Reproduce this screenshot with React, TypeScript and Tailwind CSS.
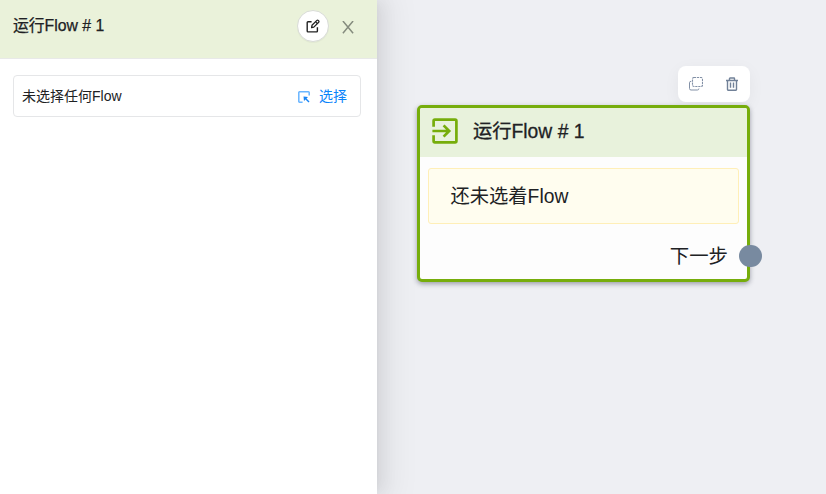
const font = "font-['Liberation_Sans','Noto_Sans_CJK_SC',sans-serif]";

function EditIcon() {
  return (
    <svg width="14" height="14" viewBox="0 0 14 14" fill="none" stroke="#222" strokeWidth="1.4">
      <path d="M5.6 2.7H2a.8.8 0 0 0-.8.8v8.6a.8.8 0 0 0 .8.8h8.6a.8.8 0 0 0 .8-.8V8.3" />
      <path d="M5.6 8.6l.4-2.3 4.9-4.9a.9.9 0 0 1 1.3 0l.5.5a.9.9 0 0 1 0 1.3L7.8 8.1z" strokeWidth="1.3" strokeLinejoin="round" />
      <path d="M9.7 2.9l1.6 1.6" strokeWidth="1.1" />
    </svg>
  );
}

function SelectIcon() {
  return (
    <svg width="12" height="12" viewBox="0 0 12 12" fill="none">
      <path d="M4.6 11.2H1.5a.7.7 0 0 1-.7-.7v-9a.7.7 0 0 1 .7-.7h9a.7.7 0 0 1 .7.7v3.1" stroke="#69b5ff" strokeWidth="1.5" />
      <path d="M11 11L6.8 6.8" stroke="#1684f5" strokeWidth="1.4" />
      <path d="M5.5 5.5l4.5.5-4 4z" fill="#1684f5" />
    </svg>
  );
}

function CopyIcon() {
  return (
    <svg width="14" height="14" viewBox="0 0 14 14" fill="none" stroke="#8290a6">
      <rect x="3.5" y="0.5" width="10" height="9" rx="1.4" strokeWidth="1.1" strokeDasharray="2.2 .8" />
      <path d="M2.3 4.3H2A1.5 1.5 0 0 0 .5 5.8v5.7A1.5 1.5 0 0 0 2 13h6.4a1.5 1.5 0 0 0 1.5-1.5" strokeWidth="1" />
    </svg>
  );
}

function TrashIcon() {
  return (
    <svg width="14" height="14" viewBox="0 0 14 14" fill="none" stroke="#718198" strokeWidth="1.4">
      <path d="M1 3.5h12M4.5 3.3V1.5a.5.5 0 0 1 .5-.5h4a.5.5 0 0 1 .5.5v1.8M2.5 3.5v9.1a.6.6 0 0 0 .6.6h7.8a.6.6 0 0 0 .6-.6V3.5" />
      <path d="M5.5 5.5v5.3M8.5 5.5v5.3" />
    </svg>
  );
}

function EnterIcon() {
  return (
    <svg width="26" height="26" viewBox="0 0 26 26" fill="none" stroke="#76ad0b" strokeWidth="2.7">
      <path d="M1.6 8.8V2.9a1.3 1.3 0 0 1 1.3-1.3h20.2a1.3 1.3 0 0 1 1.3 1.3v20.2a1.3 1.3 0 0 1-1.3 1.3H2.9a1.3 1.3 0 0 1-1.3-1.3v-5.9" />
      <path d="M.4 13h16.8M11.6 7.4l5.6 5.6-5.6 5.6" />
    </svg>
  );
}

export default function App() {
  return (
    <div className={`flex h-[494px] w-[826px] overflow-hidden bg-[#eeeff3] text-[#202124] ${font}`}>
      <aside className="z-10 flex w-[377px] shrink-0 flex-col bg-white shadow-[6px_0_16px_0_rgba(0,0,0,0.06),3px_0_6px_-4px_rgba(0,0,0,0.06),9px_0_28px_8px_rgba(0,0,0,0.05)]">
        <header className="flex h-[59px] items-start border-b border-[#e8e9e8] bg-[#eaf2da] pr-[22px] pl-[13px]">
          <h1 className="mt-[14px] flex-1 text-[15.8px] leading-6 font-normal [-webkit-text-stroke:0.25px]">运行Flow # 1</h1>
          <button className="mt-[10px] flex size-8 items-center justify-center rounded-full border border-[#d9dcd7] bg-white shadow-[0_1px_1px_rgba(0,0,0,0.04)]">
            <EditIcon />
          </button>
          <button className="mt-[21px] ml-[13px]" aria-label="关闭">
            <svg width="13" height="13" viewBox="0 0 13 13" stroke="#858c7e" strokeWidth="1.5">
              <path d="M.9 0l10.2 12.2M11.1 0L.9 12.2" />
            </svg>
          </button>
        </header>
        <div className="mt-4 mr-4 ml-[13px] flex h-[42px] items-center rounded border border-[#e5e6e8] pr-[13px] pl-2 text-[14px] leading-5">
          <span className="flex-1">未选择任何Flow</span>
          <button className="flex items-center gap-[9px] text-[#0a84fa]">
            <span className="mt-px"><SelectIcon /></span>
            <span>选择</span>
          </button>
        </div>
      </aside>
      <main className="relative flex-1">
        <div className="absolute top-[66px] left-[301px] flex h-9 w-[72px] items-center justify-between rounded-lg bg-white px-[11px] shadow-[0_4px_16px_rgba(0,0,0,0.05)]">
          <CopyIcon />
          <TrashIcon />
        </div>
        <section className="absolute top-[105px] left-[40px] flex h-[177px] w-[333px] flex-col rounded-[5px] border-[3px] border-[#76ad0b] bg-[#fdfdfd] shadow-[0_2px_5px_rgba(30,35,55,0.4)]">
          <header className="flex h-[49px] shrink-0 items-center gap-[15px] rounded-t-[2px] bg-[#e8f2dc] pb-[3px] pl-3">
            <EnterIcon />
            <h2 className="pt-0.5 text-[19.3px] leading-7 font-normal [-webkit-text-stroke:0.3px]">运行Flow # 1</h2>
          </header>
          <div className="mx-2 mt-[11px] flex h-[56px] shrink-0 items-center rounded-[3px] border-[1.5px] border-[#ffefb8] bg-[#fffdef] pt-0.5 pl-[21.5px] text-[19.3px]">
            还未选着Flow
          </div>
          <div className="mt-[18px] pr-[19px] text-right text-[19.4px] leading-7">下一步</div>
          <span className="absolute top-[136.5px] right-[-14.5px] size-[22.5px] rounded-full bg-[#788aa0]" />
        </section>
      </main>
    </div>
  );
}
